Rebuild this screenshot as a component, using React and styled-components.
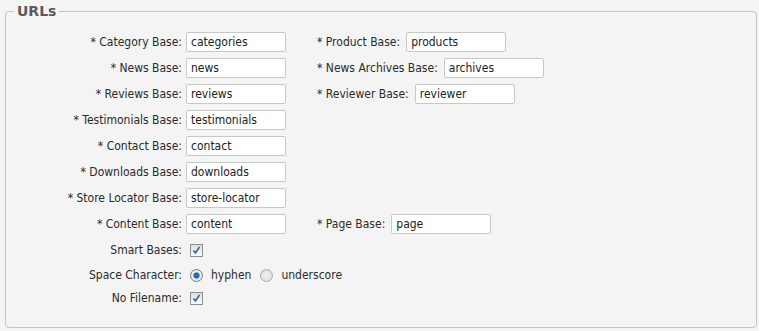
import React from "react"
import styled, { createGlobalStyle } from "styled-components"

const GlobalStyle = createGlobalStyle`
  html, body {
    margin: 0;
    padding: 0;
    background: #f4f4f4;
  }
  body {
    font-family: "DejaVu Sans Condensed", "Liberation Sans", sans-serif;
    font-size: 12px;
    color: #2b2b2b;
  }
`

const Page = styled.div`
  padding: 3px 2px 4px 5px;
  width: 759px;
  height: 331px;
  box-sizing: border-box;
`

const Fieldset = styled.fieldset`
  margin: 0;
  padding: 10px 0 20px 0;
  border: 1px solid #c4c4c4;
  border-radius: 4px;
  height: 325px;
  box-sizing: border-box;
`

const Legend = styled.legend`
  margin-left: 8px;
  padding: 0 3px;
  font-family: "DejaVu Sans", "Liberation Sans", sans-serif;
  font-weight: bold;
  font-size: 14px;
  color: #5a5a5a;
`

const Row = styled.div`
  display: flex;
  align-items: center;
  height: ${p => p.$h || 26}px;
`

const Label = styled.label`
  width: 180px;
  padding-right: 4px;
  box-sizing: border-box;
  text-align: right;
  white-space: nowrap;
`

const Side = styled.div`
  display: flex;
  align-items: center;
  margin-left: 31px;
  gap: 6px;
  white-space: nowrap;
`

const TextInput = styled.input`
  width: 100px;
  height: 20px;
  box-sizing: border-box;
  border: 1px solid #c8c8c8;
  border-radius: 2px;
  background: #fff;
  padding: 0 4px;
  font: inherit;
  color: #222;
  outline: none;
`

const Controls = styled.div`
  display: flex;
  align-items: center;
  padding-left: 4px;
`

const Box = styled.span`
  display: inline-flex;
  align-items: center;
  justify-content: center;
  width: 13px;
  height: 13px;
  box-sizing: border-box;
  border: 1px solid #8e8f8f;
  background: linear-gradient(#dcdcdc, #fdfdfd);
`

const Radio = styled.span`
  display: inline-block;
  width: 13px;
  height: 13px;
  box-sizing: border-box;
  border-radius: 50%;
  border: 1px solid ${p => (p.$on ? "#6d7f91" : "#a9a9a9")};
  background: ${p =>
    p.$on
      ? "radial-gradient(circle, #2a7fc0 0, #1a5f96 2.5px, #dfe6ec 3.5px, #f5f5f5 100%)"
      : "radial-gradient(circle, #f0f0f0 0, #dcdcdc 100%)"};
`

const Choice = styled.span`
  margin: 0 9px 0 8px;
`

const Check = () => (
  <Box>
    <svg width="9" height="9" viewBox="0 0 9 9">
      <path d="M1.5 4.5 L3.5 7 L7.5 1" fill="none" stroke="#3b5ea8" strokeWidth="1.6" />
    </svg>
  </Box>
)

const rows = [
  ["* Category Base:", "categories", "* Product Base:", "products"],
  ["* News Base:", "news", "* News Archives Base:", "archives"],
  ["* Reviews Base:", "reviews", "* Reviewer Base:", "reviewer"],
  ["* Testimonials Base:", "testimonials"],
  ["* Contact Base:", "contact"],
  ["* Downloads Base:", "downloads"],
  ["* Store Locator Base:", "store-locator"],
  ["* Content Base:", "content", "* Page Base:", "page"],
]

export default function App() {
  return (
    <Page>
      <GlobalStyle />
      <Fieldset>
        <Legend>URLs</Legend>
        {rows.map(([l, v, l2, v2]) => (
          <Row key={l}>
            <Label>{l}</Label>
            <TextInput defaultValue={v} />
            {l2 && (
              <Side>
                <span>{l2}</span>
                <TextInput defaultValue={v2} />
              </Side>
            )}
          </Row>
        ))}
        <Row $h={26}>
          <Label>Smart Bases:</Label>
          <Controls>
            <Check />
          </Controls>
        </Row>
        <Row $h={24}>
          <Label>Space Character:</Label>
          <Controls>
            <Radio $on />
            <Choice>hyphen</Choice>
            <Radio />
            <Choice>underscore</Choice>
          </Controls>
        </Row>
        <Row $h={22}>
          <Label>No Filename:</Label>
          <Controls>
            <Check />
          </Controls>
        </Row>
      </Fieldset>
    </Page>
  )
}
